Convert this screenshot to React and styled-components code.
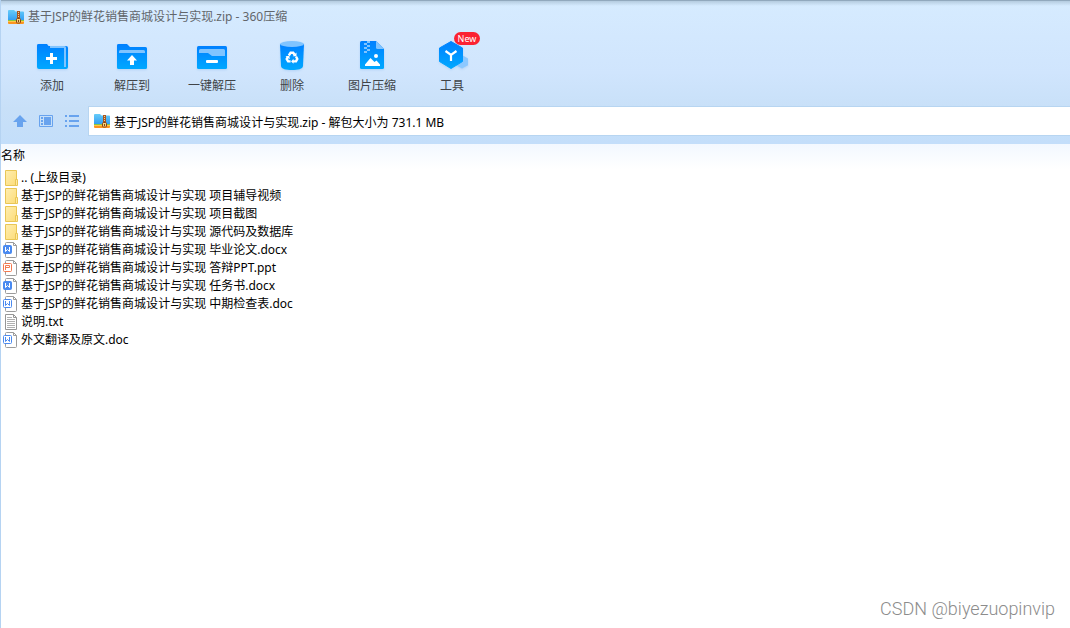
import React, { useState } from 'react';
import styled, { createGlobalStyle } from 'styled-components';

const PROJECT = '基于JSP的鲜花销售商城设计与实现';

const FILES = [
  { id: 1, type: 'folder', name: '.. (上级目录)' },
  { id: 2, type: 'folder', name: `${PROJECT} 项目辅导视频` },
  { id: 3, type: 'folder', name: `${PROJECT} 项目截图` },
  { id: 4, type: 'folder', name: `${PROJECT} 源代码及数据库` },
  { id: 5, type: 'docx', name: `${PROJECT} 毕业论文.docx` },
  { id: 6, type: 'ppt', name: `${PROJECT} 答辩PPT.ppt` },
  { id: 7, type: 'docx', name: `${PROJECT} 任务书.docx` },
  { id: 8, type: 'doc', name: `${PROJECT} 中期检查表.doc` },
  { id: 9, type: 'txt', name: '说明.txt' },
  { id: 10, type: 'doc', name: '外文翻译及原文.doc' },
];

const AddIcon = () => (
  <>
    <path d="M8 6h24a2 2 0 0 1 2 2v19a2 2 0 0 1-2 2H8z" fill="url(#blue)" />
    <path d="M16 6h14.500a1.500 1.500 0 0 1 1.500 1.500V27h-2V8H16z" fill="#80c4ff" />
    <path
      d="M3 5.500A1.500 1.500 0 0 1 4.500 4H13l3 4h12a2 2 0 0 1 2 2v19H5a2 2 0 0 1-2-2z"
      fill="url(#blue)"
    />
    <path d="M16 13h3v4h4v3h-4v4h-3v-4h-4v-3h4z" fill="#fff" />
  </>
);

const ExtractIcon = () => (
  <>
    <path
      d="M3 5.500A1.500 1.500 0 0 1 4.500 4H13l3 3h15.500A1.500 1.500 0 0 1 33 8.500v19a1.500 1.500 0 0 1-1.500 1.500h-27A1.500 1.500 0 0 1 3 27.500z"
      fill="url(#blue)"
    />
    <path d="M5 13v-1.500A1.500 1.500 0 0 1 6.500 10h23a1.500 1.500 0 0 1 1.500 1.500V13z" fill="#80c4ff" />
    <path d="M18 15l5 5.500h-3V25h-4v-4.500h-3z" fill="#fff" />
  </>
);

const OneKeyIcon = () => (
  <>
    <rect x="3" y="6" width="30" height="23" rx="1.500" fill="url(#blue)" />
    <path
      d="M5 13v-2.500A1.500 1.500 0 0 1 6.500 9h23a1.500 1.500 0 0 1 1.500 1.500V16H18l-4-3z"
      fill="#80c4ff"
    />
    <rect x="12" y="20" width="12" height="3" rx="1" fill="#fff" />
  </>
);

const DeleteIcon = () => (
  <>
    <path
      d="M6 4h24l-1 22c-.3 3-5 4-11 4s-10.700-1-11-4z"
      fill="url(#blue)"
    />
    <ellipse cx="18" cy="4" rx="12" ry="3" fill="#80c4ff" />
    <g fill="none" stroke="#fff" strokeWidth="2.400">
      <path d="M14.800 15.500l1.800-2.700h2.600l1.400 2" />
      <path d="M22 16.500l1.300 2.400-1.300 2.500h-3" />
      <path d="M16.600 21.400h-2.500l-1.400-2.500 1.200-2.200" />
    </g>
    <path d="M22.500 12.500v3.800h-3.800zM19.500 18.800v5l-2.400-2.400zM11.500 16.200l3.800-.5.500 3.500z" fill="#fff" />
  </>
);

const ImageIcon = () => (
  <>
    <path
      d="M6 2.500A1.500 1.500 0 0 1 7.500 1H22l8 8v18.500a1.500 1.500 0 0 1-1.500 1.500h-21A1.500 1.500 0 0 1 6 27.500z"
      fill="url(#blue)"
    />
    <path d="M22 1l8 8h-6.500A1.500 1.500 0 0 1 22 7.500z" fill="#80c4ff" />
    <path
      d="M13 1h3v2h-3zM10 3h3v2h-3zM13 5h3v2h-3zM10 7h3v2h-3zM13 9h3v2h-3zM10 13h3v-2h-3z"
      fill="#80c4ff"
    />
    <circle cx="22" cy="16" r="2" fill="#fff" />
    <path d="M11 26v-1.500l5.500-6.500 4 4 2-1.500 3.500 4V26z" fill="#fff" />
  </>
);

const ToolsIcon = () => (
  <>
    <path d="M28 15l6 3.400v6.800l-6 3.300-6-3.300v-6.800z" fill="#8cc8ff" />
    <path
      d="M17 1.500l11.500 6.500v13.500L17 28.500 5.500 21.500V8z"
      fill="url(#blue)"
      stroke="url(#blue)"
      strokeLinejoin="round"
    />
    <path d="M11.500 11l5.500 4 5.500-4M17 15v6" fill="none" stroke="#fff" strokeWidth="2.200" />
  </>
);

const TOOLS = [
  { id: 'add', label: '添加', Icon: AddIcon },
  { id: 'extract', label: '解压到', Icon: ExtractIcon },
  { id: 'onekey', label: '一键解压', Icon: OneKeyIcon },
  { id: 'delete', label: '删除', Icon: DeleteIcon },
  { id: 'image', label: '图片压缩', Icon: ImageIcon },
  { id: 'tools', label: '工具', Icon: ToolsIcon, badge: 'New' },
];

const ZipIcon = () => (
  <svg width="16" height="14" viewBox="0 0 16 14" aria-hidden="true">
    <path d="M0 1a1 1 0 0 1 1-1h5l1.500 1.500H15a1 1 0 0 1 1 1V11H0z" fill="url(#zip)" />
    <path d="M0 10h16v1H0z" fill="#8cc63c" />
    <path d="M0 11h16v2a1 1 0 0 1-1 1H1a1 1 0 0 1-1-1z" fill="#fb9420" />
    <path d="M0 11h16v1H0z" fill="#ffc64b" />
    <path d="M9 1h3v8H9z" fill="#a8561f" />
    <path d="M10 2h1v1h-1zM10 4h1v1h-1zM10 6h1v1h-1z" fill="#f0cc94" />
    <rect x="8.500" y="8.500" width="4" height="4.500" rx="1" fill="#f5d27e" stroke="#8a4310" />
    <path d="M10 10h1v2h-1z" fill="#8a4310" />
  </svg>
);

const FileIcon = ({ type }) => {
  if (type === 'folder') {
    return (
      <svg width="16" height="16" viewBox="0 0 16 16" aria-hidden="true">
        <path d="M2.500.5h11v15h-11z" fill="url(#folder)" stroke="#e9c655" />
        <path d="M12.500 9.500h2v6h-2z" fill="#ffe9a0" stroke="#e9c655" />
      </svg>
    );
  }
  if (type === 'txt') {
    return (
      <svg width="16" height="16" viewBox="0 0 16 16" aria-hidden="true">
        <path d="M2.500.5h8l3 3v12h-11z" fill="#fff" stroke="#969696" />
        <path d="M10.500.5v3h3" fill="none" stroke="#969696" />
        <path
          d="M4 3.500h5M4 5.500h8M4 7.500h8M4 9.500h8M4 11.500h8M4 13.500h8"
          stroke="#b0b0b0"
        />
      </svg>
    );
  }
  const color = type === 'ppt' ? '#f47a50' : '#4a8af0';
  const filled = type === 'docx';
  return (
    <svg width="16" height="16" viewBox="0 0 16 16" aria-hidden="true">
      <path
        d="M3.500.5h7l3 3v11a1 1 0 0 1-1 1h-9a1 1 0 0 1-1-1v-13a1 1 0 0 1 1-1z"
        fill="#fff"
        stroke="#9c9c9c"
      />
      <path d="M10.500.5v3h3" fill="none" stroke="#9c9c9c" />
      <rect
        x="0.500"
        y="3.500"
        width="8"
        height="8"
        rx="1"
        fill={filled ? color : '#fff'}
        stroke={color}
      />
      {type === 'ppt' ? (
        <path d="M2.500 10V5.500h4v2h-4" fill="none" stroke={color} />
      ) : (
        <path
          d="M2.500 5v4.500l2-2 2 2V5"
          fill="none"
          stroke={filled ? '#fff' : color}
        />
      )}
    </svg>
  );
};

const Gradients = () => (
  <Defs aria-hidden="true">
    <defs>
      <linearGradient id="blue" x1="0" y1="0" x2="0" y2="1">
        <stop offset="0" stopColor="#0080ff" />
        <stop offset="1" stopColor="#00a8ff" />
      </linearGradient>
      <linearGradient id="zip" x1="0" y1="0" x2="0" y2="1">
        <stop offset="0" stopColor="#66ccf9" />
        <stop offset="1" stopColor="#2f9af2" />
      </linearGradient>
      <linearGradient id="folder" x1="0" y1="0" x2="1" y2="1">
        <stop offset="0" stopColor="#ffeeb0" />
        <stop offset="1" stopColor="#fcdc78" />
      </linearGradient>
    </defs>
  </Defs>
);

function App() {
  const [path, setPath] = useState(`${PROJECT}.zip - 解包大小为 731.1 MB`);

  return (
    <Window>
      <GlobalStyle />
      <Gradients />
      <Header>
        <TitleBar>
          <ZipIcon />
          <Title>{PROJECT}.zip - 360压缩</Title>
        </TitleBar>

        <Toolbar>
          {TOOLS.map(({ id, label, Icon, badge }) => (
            <ToolButton key={id} type="button">
              <ToolIcon width="36" height="32" viewBox="0 0 36 32" aria-hidden="true">
                <Icon />
              </ToolIcon>
              {label}
              {badge && <Badge>{badge}</Badge>}
            </ToolButton>
          ))}
        </Toolbar>

        <NavBar>
          <NavButtons>
            <NavButton type="button" aria-label="向上">
              <svg width="16" height="14" viewBox="0 0 16 14" fill="#68a3ee">
                <path d="M8 1l7 7h-4v5H5V8H1z" />
              </svg>
            </NavButton>
            <NavButton type="button" aria-label="预览">
              <svg width="16" height="14" viewBox="0 0 16 14" fill="#68a3ee">
                <path d="M1.500 1.500h13v11h-13z" fill="none" stroke="#68a3ee" />
                <path d="M3 3h2v2H3zM3 6h2v2H3zM3 9h2v2H3zM6 3h7v8H6z" />
              </svg>
            </NavButton>
            <NavButton type="button" aria-label="列表">
              <svg width="16" height="14" viewBox="0 0 16 14" fill="#68a3ee">
                <path d="M1 1h2v2H1zM1 6h2v2H1zM1 11h2v2H1zM5 1h10v2H5zM5 6h10v2H5zM5 11h10v2H5z" />
              </svg>
            </NavButton>
          </NavButtons>
          <AddressBar>
            <ZipIcon />
            <AddressInput
              aria-label="路径"
              type="text"
              value={path}
              onChange={e => setPath(e.target.value)}
            />
          </AddressBar>
        </NavBar>
      </Header>

      <FileTable>
        <thead>
          <tr>
            <ColumnHead scope="col">名称</ColumnHead>
          </tr>
        </thead>
        <tbody>
          {FILES.map(file => (
            <tr key={file.id}>
              <FileCell>
                <FileName>
                  <FileIcon type={file.type} />
                  {file.name}
                </FileName>
              </FileCell>
            </tr>
          ))}
        </tbody>
      </FileTable>

      <Watermark>CSDN @biyezuopinvip</Watermark>
    </Window>
  );
}

const GlobalStyle = createGlobalStyle`
  * {
    box-sizing: border-box;
  }

  body {
    margin: 0;
    background: #fff;
    color: #000;
    font-family: 'Noto Sans', 'Noto Sans CJK SC', sans-serif;
    font-size: 12px;
    line-height: 18px;
  }

  button,
  input {
    padding: 0;
    border: 0;
    background: none;
    color: inherit;
    font: inherit;
  }

  svg {
    display: block;
    flex-shrink: 0;
  }
`;

const Defs = styled.svg`
  position: absolute;
  width: 0;
  height: 0;
`;

const Window = styled.main`
  display: flex;
  flex-direction: column;
  min-height: 100vh;
  border-left: 1px solid #b5d3f2;
`;

const Header = styled.header`
  padding-bottom: 8px;
  border-top: 1px solid #91a8bd;
  background:
    linear-gradient(#b4cbdf, rgba(180, 203, 223, 0)) 0 0 / 100% 5px no-repeat,
    linear-gradient(#d6ebff, #d0e5fd 50%, #c8e0f8 75%, #c3defa);
`;

const TitleBar = styled.div`
  display: flex;
  align-items: center;
  gap: 4px;
  height: 32px;
  padding-left: 7px;
`;

const Title = styled.h1`
  margin: 0;
  color: #62666b;
  font-size: 12px;
  font-weight: 400;
`;

const Toolbar = styled.div`
  display: flex;
  padding: 7px 11px;
`;

const ToolButton = styled.button`
  position: relative;
  display: flex;
  flex-direction: column;
  align-items: center;
  gap: 5px;
  width: 80px;
  height: 59px;
  color: #404448;
  cursor: pointer;
`;

const ToolIcon = styled.svg`
  overflow: visible;
  filter: drop-shadow(0 1px 1px rgba(60, 140, 220, 0.2));
`;

const Badge = styled.span`
  position: absolute;
  top: -8px;
  left: 42px;
  width: 26px;
  border-radius: 7px;
  background: #fb2232;
  color: #fff;
  font-size: 9px;
  line-height: 13px;
  text-align: center;
`;

const NavBar = styled.div`
  display: flex;
  align-items: center;
`;

const NavButtons = styled.div`
  display: flex;
  gap: 10px;
  padding: 0 8px 0 11px;
`;

const NavButton = styled.button`
  cursor: pointer;
`;

const AddressBar = styled.div`
  display: flex;
  flex: 1;
  align-items: center;
  gap: 4px;
  height: 30px;
  padding-left: 5px;
  border: 1px solid #b7d5f1;
  border-right: 0;
  background: #fff;
`;

const AddressInput = styled.input`
  flex: 1;
  min-width: 0;
  height: 20px;
  padding-top: 2px;
  outline: none;
`;

const FileTable = styled.table`
  width: 100%;
  border-collapse: collapse;
`;

const ColumnHead = styled.th`
  height: 25px;
  padding: 0 0 2px;
  background: linear-gradient(#f2f8ff, #fff);
  font-weight: 400;
  text-align: left;
`;

const FileCell = styled.td`
  padding: 0;
`;

const FileName = styled.div`
  display: flex;
  align-items: center;
  gap: 2px;
  height: 18px;
  padding-left: 2px;
  line-height: 16px;
  white-space: nowrap;
`;

const Watermark = styled.footer`
  margin-top: auto;
  padding: 0 15px 7px 0;
  color: #8c8c8c;
  font-family: Roboto, 'Liberation Sans', sans-serif;
  font-size: 18px;
  font-weight: 300;
  line-height: 24px;
  text-align: right;
`;

export default App;
